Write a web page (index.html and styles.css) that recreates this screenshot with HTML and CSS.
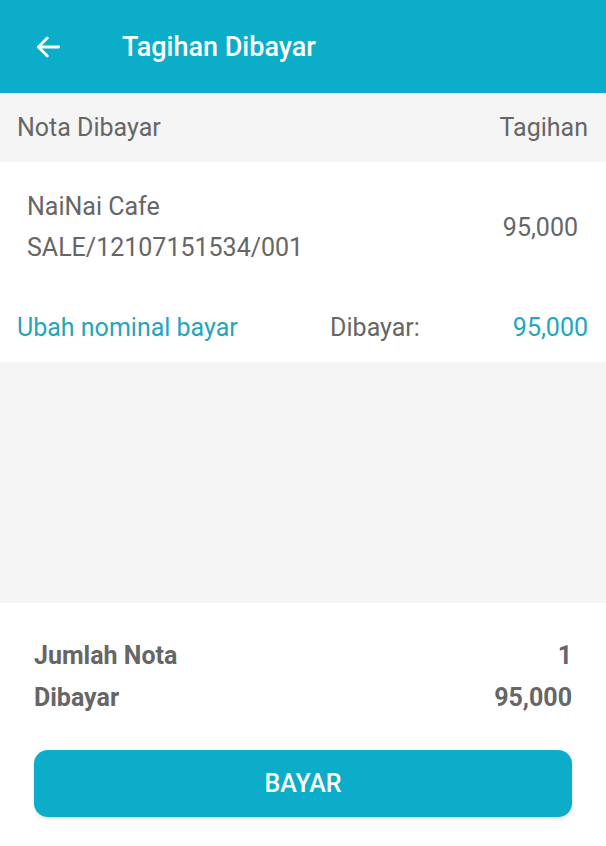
FILE: index.html
```html
<!DOCTYPE html>
<html lang="id">
<head>
<meta charset="utf-8">
<title>Tagihan Dibayar</title>
<link rel="stylesheet" href="styles.css">
</head>
<body>
<div class="app">
  <header class="topbar">
    <span class="back">
      <svg width="32" height="32" viewBox="0 0 24 24"><path d="M20 12H4.8M11.5 5.2L4.7 12l6.8 6.8" fill="none" stroke="#fff" stroke-width="2.1" stroke-linecap="round" stroke-linejoin="round"/></svg>
    </span>
    <h1 class="title">Tagihan Dibayar</h1>
  </header>
  <div class="thead">
    <span>Nota Dibayar</span>
    <span>Tagihan</span>
  </div>
  <section class="item">
    <div class="item-main">
      <div class="item-info">
        <div class="item-name">NaiNai Cafe</div>
        <div class="item-code">SALE/12107151534/001</div>
      </div>
      <div class="item-amount">95,000</div>
    </div>
    <div class="item-foot">
      <span class="link">Ubah nominal bayar</span>
      <span class="paid-label">Dibayar:</span>
      <span class="paid-value">95,000</span>
    </div>
  </section>
  <div class="filler"></div>
  <section class="summary">
    <div class="sum-row"><span>Jumlah Nota</span><span>1</span></div>
    <div class="sum-row"><span>Dibayar</span><span>95,000</span></div>
    <button class="pay">BAYAR</button>
  </section>
</div>
</body>
</html>
```

FILE: styles.css
```css
* { box-sizing: border-box; }
html, body { margin: 0; padding: 0; }
body {
  font-family: Roboto, "Noto Sans", Arial, sans-serif;
  background: #fff;
}
.app {
  display: flex;
  flex-direction: column;
  height: 846px;
}
.topbar {
  height: 93px;
  background: #0badc9;
  display: flex;
  align-items: center;
  padding-left: 32px;
  flex: none;
}
.back {
  display: flex;
  width: 32px;
  height: 32px;
}
.title {
  margin: 0 0 0 58px;
  color: #fff;
  font-size: 27px;
  font-weight: 500;
  line-height: 34px;
}
.thead {
  height: 69px;
  background: #f5f5f5;
  display: flex;
  justify-content: space-between;
  align-items: center;
  padding: 0 18px 0 17px;
  font-size: 25px;
  color: #666;
  flex: none;
}
.item {
  background: #fff;
  height: 200px;
  flex: none;
  display: flex;
  flex-direction: column;
}
.item-main {
  display: flex;
  justify-content: space-between;
  align-items: center;
  padding: 28px 28px 0 27px;
  font-size: 25px;
  color: #666;
}
.item-info {
  display: flex;
  flex-direction: column;
  gap: 7px;
}
.item-name, .item-code { line-height: 34px; }
.item-foot {
  display: flex;
  align-items: center;
  margin-top: 48px;
  padding: 0 18px 0 17px;
  font-size: 25px;
  line-height: 30px;
}
.link { color: #22a7ba; flex: 1; }
.paid-label { color: #666; margin-right: 93px; }
.paid-value { color: #22a7ba; }
.filler {
  flex: 1;
  background: #f5f5f5;
}
.summary {
  height: 243px;
  flex: none;
  background: #fff;
  padding: 32px 34px 0 34px;
  display: flex;
  flex-direction: column;
}
.sum-row {
  display: flex;
  justify-content: space-between;
  font-size: 25px;
  font-weight: 700;
  color: #666;
  line-height: 42px;
}
.pay {
  margin-top: 31px;
  height: 67px;
  border: none;
  border-radius: 14px;
  background: #0badc9;
  color: #fff;
  font-family: Roboto, sans-serif;
  font-size: 25px;
  font-weight: 500;
  box-shadow: 0 2px 3px rgba(0,0,0,0.12);
}
```
